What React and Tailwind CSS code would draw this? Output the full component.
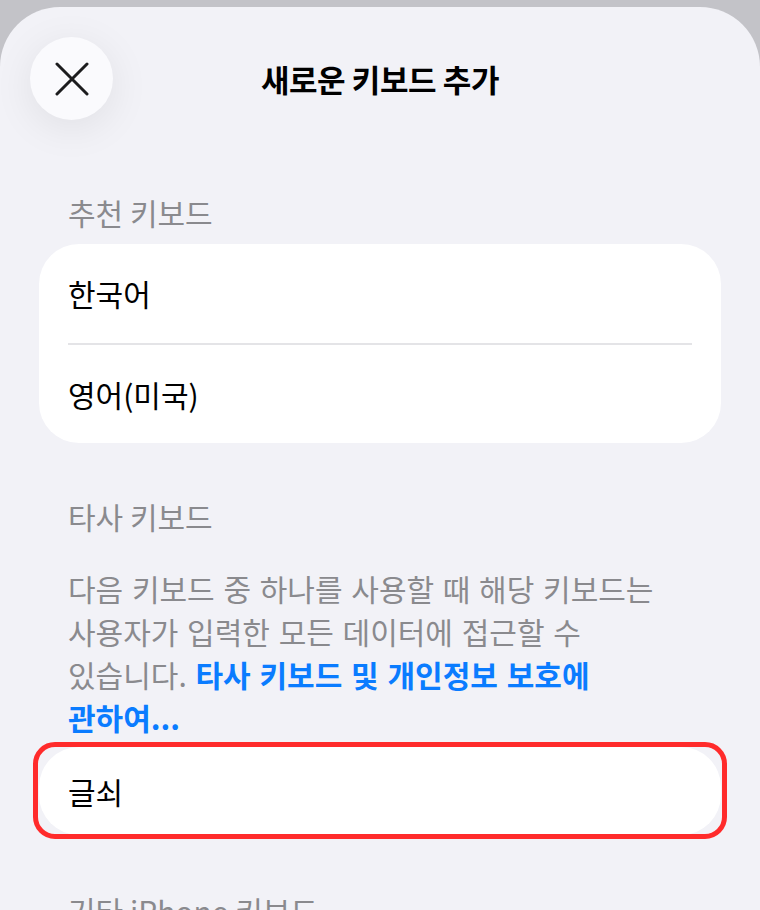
import React from "react";

const FONT = { fontFamily: '"Noto Sans CJK KR", Inter, sans-serif' };

function CloseIcon() {
  return (
    <svg width="34" height="34" viewBox="0 0 34 34" fill="none">
      <path d="M2 2 L32 32 M32 2 L2 32" stroke="#1c1c1e" strokeWidth="3" strokeLinecap="round" />
    </svg>
  );
}

export default function App() {
  return (
    <div className="w-[760px] h-[910px] overflow-hidden bg-[#c3c3c8] pt-[7px]" style={FONT}>
      <div className="h-[903px] rounded-t-[60px] bg-[#f2f2f7] overflow-hidden">
        {/* header */}
        <div className="grid grid-cols-[83px_1fr_83px] items-center px-[30px] pt-[30px]">
          <button className="w-[83px] h-[83px] rounded-full bg-[#fafafd] flex items-center justify-center shadow-[0_8px_40px_rgba(0,0,0,0.08)]">
            <CloseIcon />
          </button>
          <div className="text-center text-[31px] font-semibold text-black leading-none tracking-[-0.4px]">
            새로운 키보드 추가
          </div>
          <div />
        </div>

        {/* section 1 */}
        <div className="px-[68px] mt-[75px] text-[30px] leading-[34px] text-[#8a8a8e]">추천 키보드</div>
        <div className="mx-[39px] mt-[15px] bg-white rounded-[40px] overflow-hidden">
          <div className="h-[99px] flex items-center px-[29px] text-[30px] text-black">한국어</div>
          <div className="mx-[29px] h-[2px] bg-[#e4e4e7]" />
          <div className="h-[98px] flex items-center px-[29px] text-[30px] text-black">영어(미국)</div>
        </div>

        {/* section 2 */}
        <div className="px-[68px] mt-[56px] text-[30px] leading-[34px] text-[#8a8a8e]">타사 키보드</div>
        <p className="pl-[68px] pr-[90px] mt-[34px] text-[30px] leading-[43px] text-[#8a8a8e] break-keep [word-spacing:2px]">
          다음 키보드 중 하나를 사용할 때 해당 키보드는 사용자가 입력한 모든 데이터에 접근할 수 있습니다.{" "}
          <span className="text-[#0a7cff] font-semibold">타사 키보드 및 개인정보 보호에 관하여...</span>
        </p>

        <div className="relative mx-[39px] mt-[8px]">
          <div className="h-[88px] bg-white rounded-[40px] flex items-center px-[29px] text-[30px] text-black">
            글쇠
          </div>
          <div className="absolute -inset-x-[6px] -top-[5px] -bottom-[4px] border-[5px] border-[#ff2b2b] rounded-[22px] pointer-events-none" />
        </div>

        {/* section 3 */}
        <div className="px-[68px] mt-[58px] text-[30px] leading-[34px] text-[#8a8a8e]">기타 iPhone 키보드</div>
      </div>
    </div>
  );
}
